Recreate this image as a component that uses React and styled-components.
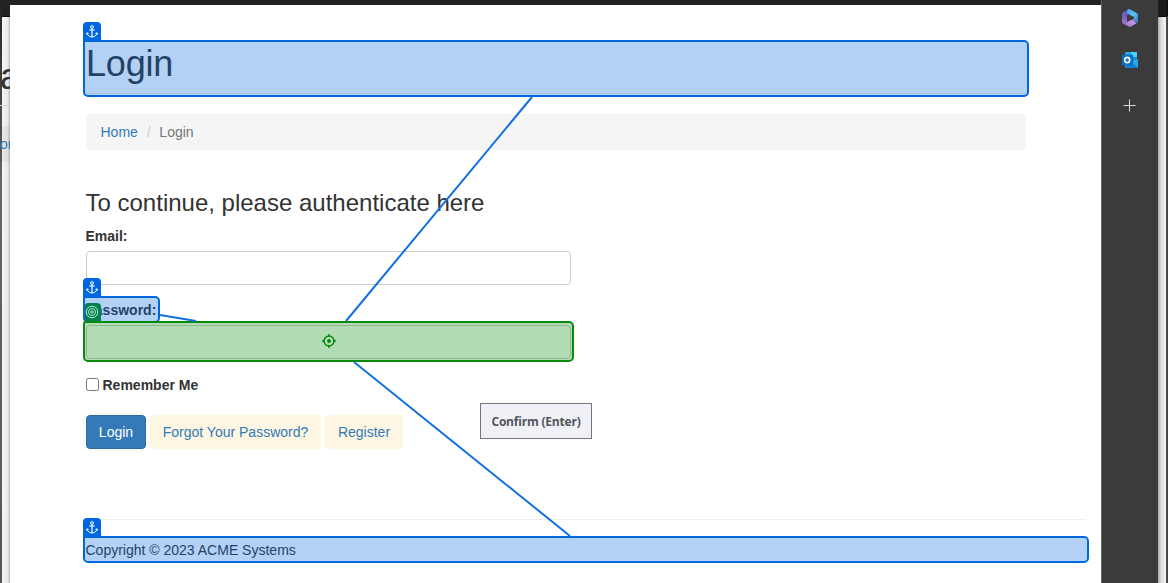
import React from "react";
import styled, { createGlobalStyle, css } from "styled-components";

const Global = createGlobalStyle`
  * { box-sizing: border-box; }
  body { margin: 0; overflow: hidden; background: #fff; }
`;

const Screen = styled.div`
  display: flex;
  position: relative;
  width: 1168px;
  height: 583px;
  overflow: hidden;
  font: 14px/20px "Liberation Sans", Arial, sans-serif;
  color: #333;
`;

const EdgeLeft = styled.div`
  flex: 0 0 10px;
  min-width: 0;
  display: flex;
`;
const DarkEdge = styled.div`
  flex: 0 0 2px;
  background: linear-gradient(#222 0, #333 50px, #666 180px, #555 100%);
`;
const BackPage = styled.div`
  flex: 1;
  min-width: 0;
  background: linear-gradient(90deg, #f6f6f6, #e9e9e9 70%, #bbb);
`;
const BackBar = styled.div`
  height: 17px;
  background: #222;
  border-bottom: 1px solid #080808;
`;
const BackTitle = styled.div`
  height: 89px;
  padding-top: 40px;
  margin-left: -2px;
  font-size: 36px;
  line-height: 40px;
  border-bottom: 1px solid #d4d4d4;
`;
const BackCrumb = styled.div`
  height: 36px;
  margin: 20px 0 0 -2px;
  padding-top: 8px;
  background: rgba(0, 0, 0, 0.05);
  color: #337ab7;
`;

const Page = styled.main`
  position: relative;
  flex: 0 0 1091px;
  height: 583px;
  padding: 38px 15px 0 76px;
  border-top: 5px solid #222;
  background: #fff;
`;

const Anchored = styled.div`
  position: relative;
  width: ${(p) => p.$width};
`;
const Mark = styled.div`
  position: absolute;
  z-index: 2;
  inset: ${(p) => p.$inset || "-3px"};
  border: 2px solid ${(p) => (p.$target ? "#078a0c" : "#0067df")};
  border-radius: ${(p) => (p.$target ? "3px 5px 5px 5px" : "0 5px 5px 5px")};
  background: ${(p) => (p.$target ? "rgba(5,138,7,.3)" : "rgba(0,103,223,.3)")};
  background-clip: padding-box;
  display: flex;
  align-items: center;
  justify-content: center;
  padding-bottom: ${(p) => (p.$target ? "2px" : "0")};
`;
const Badge = styled.span`
  position: absolute;
  left: -2px;
  top: -20px;
  display: flex;
  align-items: center;
  justify-content: center;
  width: 18px;
  height: 19px;
  border-radius: 4px 4px 0 0;
  background: #0067df;
  ${(p) =>
    p.$target &&
    css`
      background: #038050;
      border-radius: 3px 4px 0 0;
      left: 0;
      width: 16px;
      height: 18px;
      padding-right: 2px;
    `}
`;

const Title = styled.h1`
  margin: 0 0 20px;
  height: 51px;
  padding-top: 1px;
  font-size: 36px;
  line-height: 40px;
  font-weight: 400;
  letter-spacing: -0.2px;
  border-bottom: 1px solid #eee;
`;
const Crumbs = styled.nav`
  display: flex;
  width: 940px;
  height: 36px;
  padding: 8px 14.5px;
  border-radius: 4px;
  background: #f5f5f5;
  color: #777;
`;
const CrumbLink = styled.a`
  color: #337ab7;
`;
const Slash = styled.span`
  width: 21.5px;
  text-align: center;
  color: #ccc;
`;
const Heading = styled.h3`
  margin: 40px 0 10px -0.5px;
  font-size: 24px;
  line-height: 26px;
  font-weight: 400;
`;
const Label = styled.label`
  display: block;
  height: 20px;
  margin-left: -0.5px;
  font-weight: 700;
`;
const Input = styled.input`
  display: block;
  width: 485px;
  height: 34px;
  border: 1px solid #ccc;
  border-radius: 4px;
  background: #fff;
  outline: none;
`;
const Group = styled.div`
  display: flex;
  flex-direction: column;
  gap: 5px;
  margin-bottom: ${(p) => p.$after};
`;
const Remember = styled.label`
  display: flex;
  align-items: center;
  gap: 3.5px;
  height: 20px;
  margin-bottom: 20px;
  font-weight: 700;
`;
const Check = styled.input`
  width: 13px;
  height: 13px;
  margin: -1px 0 0;
`;
const Actions = styled.div`
  display: flex;
  gap: 4px;
  height: 34px;
  margin-bottom: 70px;
`;
const Button = styled.button`
  width: ${(p) => p.$width};
  padding: 0;
  font: inherit;
  border-radius: 4px;
  border: 1px solid ${(p) => (p.$primary ? "#2e6da4" : "#fcf6e2")};
  background: ${(p) => (p.$primary ? "#337ab7" : "#fcf6e2")};
  color: ${(p) => (p.$primary ? "#fff" : "#337ab7")};
`;
const Rule = styled.hr`
  width: 1000px;
  height: 1px;
  margin: 0 0 20px;
  border: 0;
  background: #eee;
`;
const Copyright = styled.p`
  margin: 0 0 0 -0.5px;
`;

const Confirm = styled.button`
  position: absolute;
  z-index: 4;
  left: 480px;
  top: 403px;
  width: 112px;
  height: 36px;
  padding: 1px 0 0;
  border: 1px solid #74757a;
  background: #f0f1f7;
  color: #52555a;
  font: 700 12px/16px "Open Sans", "Noto Sans", sans-serif;
  letter-spacing: -0.2px;
  white-space: nowrap;
`;
const Connectors = styled.svg`
  position: absolute;
  z-index: 3;
  inset: 0;
  pointer-events: none;
`;

const Sidebar = styled.aside`
  flex: 0 0 57px;
  display: flex;
  flex-direction: column;
  align-items: center;
  padding: 8px 1px 0 0;
  border-left: 1px solid #666;
  background: #3b3b3b;
`;
const IconSlot = styled.span`
  display: flex;
  align-items: center;
  justify-content: center;
  height: 20px;
  margin-bottom: ${(p) => p.$after || "0"};
`;
const EdgeRight = styled.div`
  flex: 1;
  display: flex;
`;
const RightStrip = styled.div`
  flex: 0 0 8px;
  background: linear-gradient(90deg, #aaa, #ddd 40%, #f5f5f5);
`;
const RightDark = styled.div`
  flex: 1;
  background: linear-gradient(#111 0 16px, #494944 17px 100%);
`;
const RightBar = styled.div`
  height: 17px;
  background: #1b1b1b;
  border-bottom: 1px solid #080808;
`;

const AnchorIcon = () => (
  <svg width="12" height="13" viewBox="0 0 12 13" fill="none" stroke="#fff" strokeWidth="1">
    <circle cx="6" cy="2" r="1.4" />
    <path d="M6 3.4V12M3.2 5H8.8" strokeWidth="1.2" />
    <path d="M1 8C1.500 10.600 3.500 11.900 6 12 8.500 11.900 10.500 10.600 11 8M.5 9.500 1 7.800 2.600 8.700M11.500 9.500 11 7.800 9.400 8.700" />
  </svg>
);
const BadgeTargetIcon = () => (
  <svg width="14" height="14" viewBox="0 0 14 14" fill="none" stroke="#b4e3c5">
    <circle cx="7" cy="7" r="5.8" />
    <circle cx="7" cy="7" r="3.5" />
    <circle cx="7" cy="7" r="1.2" />
  </svg>
);
const CrosshairIcon = () => (
  <svg width="14" height="14" viewBox="0 0 14 14" fill="none" stroke="#078a0c" strokeWidth="1.500">
    <circle cx="7" cy="7" r="5" />
    <circle cx="7" cy="7" r="1.900" fill="#078a0c" stroke="none" />
    <path d="M7 0v3M7 11v3M0 7h3M11 7h3" />
  </svg>
);
const OfficeIcon = () => (
  <svg width="18" height="20" viewBox="0 0 18 20">
    <defs>
      <linearGradient id="officeBlue" x1="0" y1="0" x2="1" y2="1">
        <stop stopColor="#4b9ee8" />
        <stop offset=".5" stopColor="#54c5f2" />
        <stop offset="1" stopColor="#3668cf" />
      </linearGradient>
      <linearGradient id="officePurple" x1="0" y1="0" x2="0" y2="1">
        <stop stopColor="#5358b6" />
        <stop offset=".55" stopColor="#7d62be" />
        <stop offset="1" stopColor="#a37be0" />
      </linearGradient>
      <linearGradient id="officePink" x1="0" y1="1" x2="1" y2="0">
        <stop stopColor="#9e70d4" />
        <stop offset=".6" stopColor="#c793e8" />
        <stop offset="1" stopColor="#6666cf" />
      </linearGradient>
    </defs>
    <path d="M7 1.300 2 4.300Q1 5 1 6.200v7.600q0 1 1 1.600l2.200 1.100q1.800.1 1.800-2V7.200L8.500 5V1.300Z" fill="url(#officePurple)" />
    <path d="M6.800 1.400q1.200-.8 2.600 0l6.600 3.800q1 .7 1 1.900v6.200q0 1.200-1 1.700-2.500-.6-3-3V9L6.500 5.700q-1-2.500.3-4.300Z" fill="url(#officeBlue)" />
    <path d="M3.500 16.200q2.500.1 3-2.400l6.500-3.100v1.800q.5 2 3 2.500l-6 3.500q-1.100.5-2.200 0Z" fill="url(#officePink)" />
  </svg>
);
const OutlookIcon = () => (
  <svg width="16" height="16" viewBox="0 0 16 16">
    <path d="M3 .8Q3 0 3.800 0H15v10H3Z" fill="#1686d1" />
    <path d="M9 0h5.200q.8 0 .8.800V5H9Z" fill="#4bd3fa" />
    <path d="M3 1q0-1 1-1h5v5H3Z" fill="#2aaae5" />
    <path d="M9 5h6v4.500H9Z" fill="#168bd5" />
    <path d="M3 9h7l6-2v8q0 1-1 1H4q-1 0-1-1Z" fill="#28a8ea" />
    <path d="m9 10 7 5.400Q15.600 16 15 16H4q-1 0-1-1Z" fill="#1680ce" />
    <rect y="2.500" width="11" height="11" rx="1" fill="#086fc1" />
    <ellipse cx="5.200" cy="8" rx="2.500" ry="2.700" fill="none" stroke="#fff" strokeWidth="1.700" />
  </svg>
);
const PlusIcon = () => (
  <svg width="13" height="13" viewBox="0 0 13 13" stroke="#ddd" strokeWidth="1">
    <path d="M6.500 .5v12M.5 6.500h12" />
  </svg>
);

const AnchorMark = ({ inset }) => (
  <Mark $inset={inset}>
    <Badge><AnchorIcon /></Badge>
  </Mark>
);

export default function App() {
  return (
    <Screen>
      <Global />
      <EdgeLeft>
        <DarkEdge />
        <BackPage>
          <BackBar />
          <BackTitle>a</BackTitle>
          <BackCrumb>or</BackCrumb>
        </BackPage>
      </EdgeLeft>
      <Page>
        <Anchored $width="940px">
          <Title>Login</Title>
          <AnchorMark />
        </Anchored>
        <Crumbs>
          <CrumbLink>Home</CrumbLink>
          <Slash>/</Slash>
          <span>Login</span>
        </Crumbs>
        <Heading>To continue, please authenticate here</Heading>
        <Group $after="15px">
          <Label>Email:</Label>
          <Input aria-label="Email" />
        </Group>
        <Group $after="16px">
          <Anchored $width="71px">
            <Label>Password:</Label>
            <AnchorMark inset="-4px -3px -3px -3px" />
          </Anchored>
          <Anchored $width="485px">
            <Input aria-label="Password" />
            <Mark $target $inset="-4px -3px -3px -3px">
              <Badge $target><BadgeTargetIcon /></Badge>
              <CrosshairIcon />
            </Mark>
          </Anchored>
        </Group>
        <Remember><Check type="checkbox" />Remember Me</Remember>
        <Actions>
          <Button $primary $width="60px">Login</Button>
          <Button $width="171px">Forgot Your Password?</Button>
          <Button $width="78px">Register</Button>
        </Actions>
        <Rule />
        <Anchored $width="1000px">
          <Copyright>Copyright © 2023 ACME Systems</Copyright>
          <AnchorMark inset="-4px -3px -3px" />
        </Anchored>
      </Page>
      <Sidebar>
        <IconSlot $after="22px"><OfficeIcon /></IconSlot>
        <IconSlot $after="25px"><OutlookIcon /></IconSlot>
        <IconSlot><PlusIcon /></IconSlot>
      </Sidebar>
      <EdgeRight>
        <RightStrip><RightBar /></RightStrip>
        <RightDark />
      </EdgeRight>
      <Connectors width="1168" height="583" fill="none" stroke="#126fe1" strokeWidth="2">
        <path d="M532 97 346 321M160 315l36 6M354 362l216 174" />
      </Connectors>
      <Confirm>Confirm (Enter)</Confirm>
    </Screen>
  );
}
